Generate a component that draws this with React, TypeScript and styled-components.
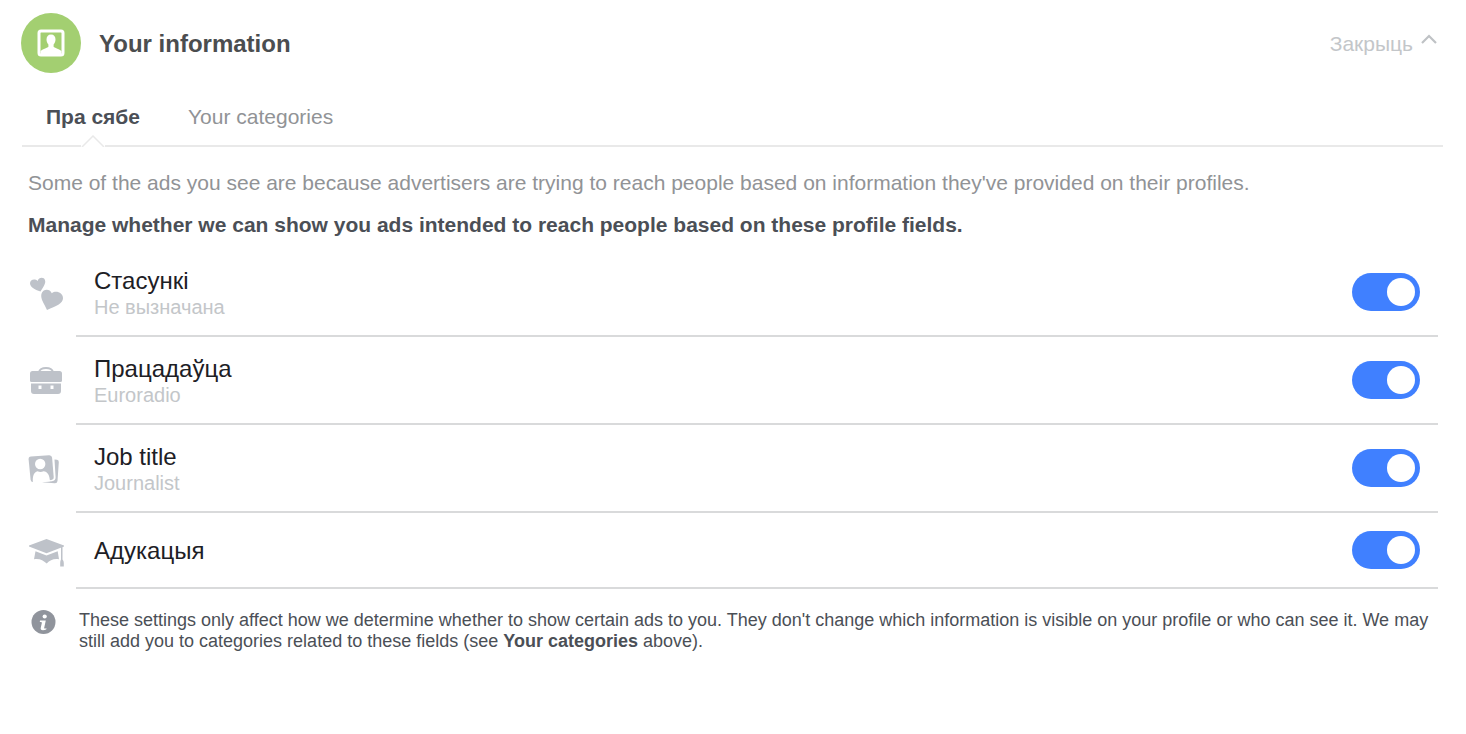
import React, { useState } from "react";
import styled, { createGlobalStyle } from "styled-components";

const GlobalStyle = createGlobalStyle`
  *, *::before, *::after { box-sizing: border-box; }
  body {
    margin: 0;
    background: #fff;
    font-family: "Liberation Sans", Arial, sans-serif;
  }
  h1, h2, p { margin: 0; }
  button { border: 0; padding: 0; background: none; font: inherit; cursor: pointer; }
`;

const Page = styled.main`
  padding: 13px 23px 24px 21px;
`;

const Header = styled.header`
  display: flex;
  align-items: center;
  gap: 18px;
`;

const Badge = styled.span`
  display: flex;
  align-items: center;
  justify-content: center;
  width: 60px;
  height: 60px;
  border-radius: 50%;
  background: #a3cf71;
`;

const Title = styled.h1`
  flex: 1;
  padding-top: 2px;
  font-size: 24px;
  line-height: 28px;
  color: #4b4d4f;
`;

const CloseButton = styled.button`
  display: flex;
  gap: 8px;
  padding: 2px 6px 0 0;
  font-size: 21px;
  line-height: 24px;
  color: #c3c6c9;
`;

const Tabs = styled.div`
  display: flex;
  margin: 24px 0 0 1px;
  padding: 0 24px;
  gap: 48px;
  border-bottom: 2px solid #e9e9e9;
`;

const Tab = styled.button<{ $active: boolean }>`
  position: relative;
  height: 48px;
  padding-bottom: 8px;
  font-size: 21px;
  line-height: 24px;
  font-weight: ${(p) => (p.$active ? 700 : 400)};
  color: ${(p) => (p.$active ? "#4b4f56" : "#919396")};
`;

const TabCaret = styled.svg`
  position: absolute;
  left: 50%;
  bottom: -2px;
  margin-left: -12px;
`;

const Panel = styled.section`
  padding: 24px 5px 0 7px;
`;

const Intro = styled.p`
  font-size: 21px;
  line-height: 24px;
  color: #919396;
`;

const Prompt = styled.h2`
  margin-top: 18px;
  font-size: 21px;
  line-height: 24px;
  color: #4b4f56;
`;

const Fields = styled.div`
  padding-top: 12px;
`;

const FieldRow = styled.div`
  display: flex;
  align-items: stretch;
`;

const IconCell = styled.span`
  display: flex;
  align-items: center;
  width: 48px;
  flex: none;
`;

const FieldBody = styled.div<{ $compact: boolean }>`
  display: flex;
  flex: 1;
  align-items: center;
  justify-content: space-between;
  height: ${(p) => (p.$compact ? 76 : 88)}px;
  padding: 0 18px;
  border-bottom: 2px solid #d9dadb;
`;

const FieldLabel = styled.label`
  display: flex;
  flex-direction: column;
  padding-top: 2px;
`;

const FieldName = styled.span`
  font-size: 24px;
  line-height: 28px;
  color: #1d2025;
`;

const FieldValue = styled.span`
  font-size: 20px;
  line-height: 24px;
  color: #c3c6c9;
`;

const Switch = styled.input`
  display: flex;
  align-items: center;
  width: 68px;
  height: 38px;
  margin: 0;
  padding: 0 5px;
  appearance: none;
  border-radius: 19px;
  background: #bec3c9;
  cursor: pointer;

  &::before {
    content: "";
    width: 28px;
    height: 28px;
    border-radius: 50%;
    background: #fff;
  }
  &:checked {
    justify-content: flex-end;
    background: #4080ff;
  }
`;

const Note = styled.div`
  display: flex;
  gap: 23px;
  padding: 21px 0 0 3px;
`;

const NoteIcon = styled.svg`
  flex: none;
`;

const NoteText = styled.p`
  font-size: 18px;
  line-height: 21px;
  color: #4b4f56;
`;

const ICON = "#bec2c9";

const ProfileIcon = () => (
  <svg width="28" height="28" viewBox="0 0 28 28" aria-hidden="true">
    <rect x="2" y="2" width="24" height="24" rx="2" fill="none" stroke="#fff" strokeWidth="3" />
    <path
      fill="#fff"
      d="M14 5.500c-3 0-4.500 2-4.500 5 0 2.200.8 3.800 1.900 5v2.200c-1 1.200-5 2-7.900 4.300V25h21v-3c-2.900-2.300-6.900-3.100-7.900-4.300v-2.200c1.100-1.200 1.900-2.800 1.900-5 0-3-1.500-5-4.500-5z"
    />
  </svg>
);

const HeartsIcon = () => (
  <svg width="38" height="38" viewBox="0 0 38 38" fill={ICON} aria-hidden="true">
    <path d="M12.500 17.500C6.500 15.400 2 13 2 9.200c0-3.700 4.800-5 7.700-2.200C10.500 3.300 16 2.700 17 6.200c1.200 3.200-2 7-4.500 11.300z" />
    <path d="M19 36C16.300 29.500 12.300 25.400 13.400 20c1.200-5 8.300-5.800 10.400-.8 4.500-3.400 11.200-.1 11.200 5C35 29.500 28 32 19 36z" />
  </svg>
);

const BriefcaseIcon = () => (
  <svg width="38" height="38" viewBox="0 0 38 38" fill={ICON} aria-hidden="true">
    <path
      d="M11 10c.8-2.800 3-4 7-4s6.200 1.200 7 4"
      fill="none"
      stroke={ICON}
      strokeWidth="2"
    />
    <path d="M4.500 9h27q2.500 0 2.500 2.500v7q0 1.500-1.500 1.500h-29q-1.500 0-1.500-1.500v-7Q2 9 4.500 9z" />
    <path
      fillRule="evenodd"
      d="M3 21.500h30V29q0 3-3 3H6q-3 0-3-3zM10.500 23.500v3.500h3v-3.500zM22.500 23.500v3.500h3v-3.500z"
    />
  </svg>
);

const IdCardsIcon = () => (
  <svg width="38" height="38" viewBox="0 0 38 38" aria-hidden="true">
    <path
      fill={ICON}
      d="M26.500 9.500l2.500.3q2 .4 1.800 2.400L29.500 31q-.3 2.500-2.800 2.300L14 32.300l10-1q3.700-.4 3.600-4z"
    />
    <path
      fill={ICON}
      d="M3 6.500l18-1.300q2.800-.2 3.100 2.600l1.600 19.200q.2 2.600-2.400 2.900L5.300 31.900q-2.400.2-2.700-2.200L.600 9.300Q.4 6.700 3 6.500z"
    />
    <circle cx="12.200" cy="14" r="5.200" fill="#fff" />
    <path
      fill="#fff"
      d="M5 33c-.8-7 1-11 4.500-11.800q3 1.600 6 0c4 .4 6 3.500 6.500 10z"
    />
  </svg>
);

const GraduationIcon = () => (
  <svg width="38" height="38" viewBox="0 0 38 38" fill={ICON} aria-hidden="true">
    <path d="M18.500 7L36 13.500v1L18.500 21.300 1 14.500v-1z" />
    <path d="M7.500 19.200l11 4.300 11.200-4.300 1.300 8c-5.500-.8-9 1-12.300 4.300C15 28.300 12 26.400 6 27.200z" />
    <path d="M33 15h1.500v12.500q1.300 1 1.300 3.500v3.500h-3.600V31q0-2.500.8-3.500z" />
  </svg>
);

const FIELDS = [
  { id: "relationship", name: "Стасункі", value: "Не вызначана", Icon: HeartsIcon },
  { id: "employer", name: "Працадаўца", value: "Euroradio", Icon: BriefcaseIcon },
  { id: "job", name: "Job title", value: "Journalist", Icon: IdCardsIcon },
  { id: "education", name: "Адукацыя", value: "", Icon: GraduationIcon },
];

const TABS = ["Пра сябе", "Your categories"];

export default function App() {
  const [tab, setTab] = useState(0);
  return (
    <>
      <GlobalStyle />
      <Page>
        <Header>
          <Badge>
            <ProfileIcon />
          </Badge>
          <Title>Your information</Title>
          <CloseButton type="button">
            Закрыць
            <svg width="16" height="16" viewBox="0 0 16 16" aria-hidden="true">
              <path d="M1 11l7-7 7 7" fill="none" stroke="#bfc2c5" strokeWidth="2.200" />
            </svg>
          </CloseButton>
        </Header>
        <Tabs role="tablist">
          {TABS.map((name, i) => (
            <Tab
              key={name}
              type="button"
              role="tab"
              aria-selected={tab === i}
              $active={tab === i}
              onClick={() => setTab(i)}
            >
              {name}
              {tab === i && (
                <TabCaret width="24" height="12" viewBox="0 0 24 12" aria-hidden="true">
                  <path d="M0 9h24v3H0z" fill="#fff" />
                  <path d="M1 12L12 1l11 11" fill="#fff" stroke="#e9e9e9" strokeWidth="1.500" />
                </TabCaret>
              )}
            </Tab>
          ))}
        </Tabs>
        <Panel>
          <Intro>
            Some of the ads you see are because advertisers are trying to reach people based on
            information they've provided on their profiles.
          </Intro>
          <Prompt>
            Manage whether we can show you ads intended to reach people based on these profile
            fields.
          </Prompt>
          <Fields>
            {FIELDS.map(({ id, name, value, Icon }) => (
              <FieldRow key={id}>
                <IconCell>
                  <Icon />
                </IconCell>
                <FieldBody $compact={!value}>
                  <FieldLabel htmlFor={id}>
                    <FieldName>{name}</FieldName>
                    {value && <FieldValue>{value}</FieldValue>}
                  </FieldLabel>
                  <Switch id={id} type="checkbox" role="switch" defaultChecked />
                </FieldBody>
              </FieldRow>
            ))}
          </Fields>
          <Note>
            <NoteIcon width="25" height="25" viewBox="0 0 25 25" aria-hidden="true">
              <circle cx="12.500" cy="12" r="12" fill="#90949c" />
              <circle cx="13.700" cy="6.500" r="2.100" fill="#fff" />
              <path
                fill="#fff"
                d="M9 10.500h5.800l-1.600 7.200c-.2 1 .6 1.100 2.300.5l-.3 1.300c-2.700 1.300-6 1.200-5.500-1.400l1.200-5.300c.1-.7-.4-.9-2.100-.9z"
              />
            </NoteIcon>
            <NoteText>
              These settings only affect how we determine whether to show certain ads to you. They
              don't change which information is visible on your profile or who can see it. We may
              still add you to categories related to these fields (see <b>Your categories</b>{" "}
              above).
            </NoteText>
          </Note>
        </Panel>
      </Page>
    </>
  );
}
